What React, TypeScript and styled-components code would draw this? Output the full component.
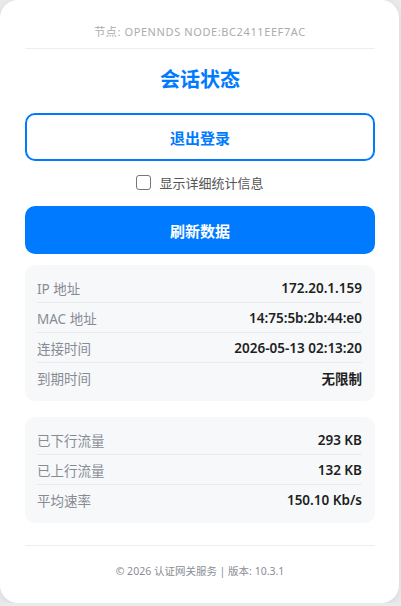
import React, { useState } from 'react';
import styled, { createGlobalStyle } from 'styled-components';

const GlobalStyle = createGlobalStyle`
  html, body {
    margin: 0;
    padding: 0;
    background: #e9eaec;
    font-family: "Noto Sans", "Noto Sans CJK SC", sans-serif;
  }
`;

const Card = styled.div`
  box-sizing: border-box;
  width: 399px;
  height: 603px;
  background: #fff;
  border-radius: 18px;
  box-shadow: 0 2px 10px rgba(0, 0, 0, 0.08);
  padding: 24px 24px 0 25px;
  display: flex;
  flex-direction: column;
`;

const NodeLabel = styled.div`
  text-align: center;
  font-size: 11px;
  line-height: 16px;
  letter-spacing: 0.6px;
  color: #a9acb1;
  text-transform: uppercase;
  padding-bottom: 8px;
  border-bottom: 1px solid #eceef1;
`;

const Title = styled.h2`
  margin: 17px 0 0;
  text-align: center;
  font-size: 20px;
  line-height: 28px;
  font-weight: 700;
  color: #007bff;
`;

const Button = styled.button<{ $solid?: boolean }>`
  box-sizing: border-box;
  width: 100%;
  height: 48px;
  border-radius: 10px;
  border: 2px solid #007bff;
  background: ${p => (p.$solid ? '#007bff' : '#fff')};
  color: ${p => (p.$solid ? '#fff' : '#007bff')};
  font-family: inherit;
  font-size: 15px;
  font-weight: 700;
  cursor: pointer;
`;

const LogoutButton = styled(Button)`
  margin-top: 19px;
`;

const RefreshButton = styled(Button)`
  margin-top: 14px;
`;

const CheckRow = styled.label`
  margin-top: 11px;
  height: 20px;
  display: flex;
  align-items: center;
  justify-content: center;
  gap: 8px;
  font-size: 13px;
  color: #555;
  cursor: pointer;
`;

const Box = styled.span<{ $on: boolean }>`
  box-sizing: border-box;
  width: 15px;
  height: 15px;
  border: 1.5px solid #767676;
  border-radius: 3px;
  background: ${p => (p.$on ? '#007bff' : '#fff')};
`;

const Panel = styled.div<{ $gap: number }>`
  margin-top: ${p => p.$gap}px;
  background: #f7f8fa;
  border-radius: 10px;
  padding: 8px 13px 8px 12px;
`;

const Row = styled.div`
  display: flex;
  justify-content: space-between;
  align-items: center;
  height: 30px;
  font-size: 13.5px;
  border-bottom: 1px solid #e9ebee;
  box-sizing: border-box;

  &:last-child {
    border-bottom: none;
  }
`;

const Label = styled.span`
  color: #878c94;
`;

const Value = styled.span`
  color: #1d1f22;
  font-weight: 600;
`;

const Footer = styled.div`
  margin-top: 22px;
  border-top: 1px solid #eceef1;
  padding-top: 17px;
  text-align: center;
  font-size: 10.5px;
  line-height: 16px;
  color: #8a8e95;
`;

const sessionInfo = [
  ['IP 地址', '172.20.1.159'],
  ['MAC 地址', '14:75:5b:2b:44:e0'],
  ['连接时间', '2026-05-13 02:13:20'],
  ['到期时间', '无限制'],
];

const trafficInfo = [
  ['已下行流量', '293 KB'],
  ['已上行流量', '132 KB'],
  ['平均速率', '150.10 Kb/s'],
];

export default function App() {
  const [details, setDetails] = useState(false);

  return (
    <>
      <GlobalStyle />
      <Card>
        <NodeLabel>节点: openNDS Node:bc2411eef7ac</NodeLabel>
        <Title>会话状态</Title>
        <LogoutButton>退出登录</LogoutButton>
        <CheckRow onClick={() => setDetails(!details)}>
          <Box $on={details} />
          显示详细统计信息
        </CheckRow>
        <RefreshButton $solid>刷新数据</RefreshButton>

        <Panel $gap={11}>
          {sessionInfo.map(([k, v]) => (
            <Row key={k}>
              <Label>{k}</Label>
              <Value>{v}</Value>
            </Row>
          ))}
        </Panel>

        <Panel $gap={16}>
          {trafficInfo.map(([k, v]) => (
            <Row key={k}>
              <Label>{k}</Label>
              <Value>{v}</Value>
            </Row>
          ))}
        </Panel>

        <Footer>© 2026 认证网关服务 | 版本: 10.3.1</Footer>
      </Card>
    </>
  );
}
